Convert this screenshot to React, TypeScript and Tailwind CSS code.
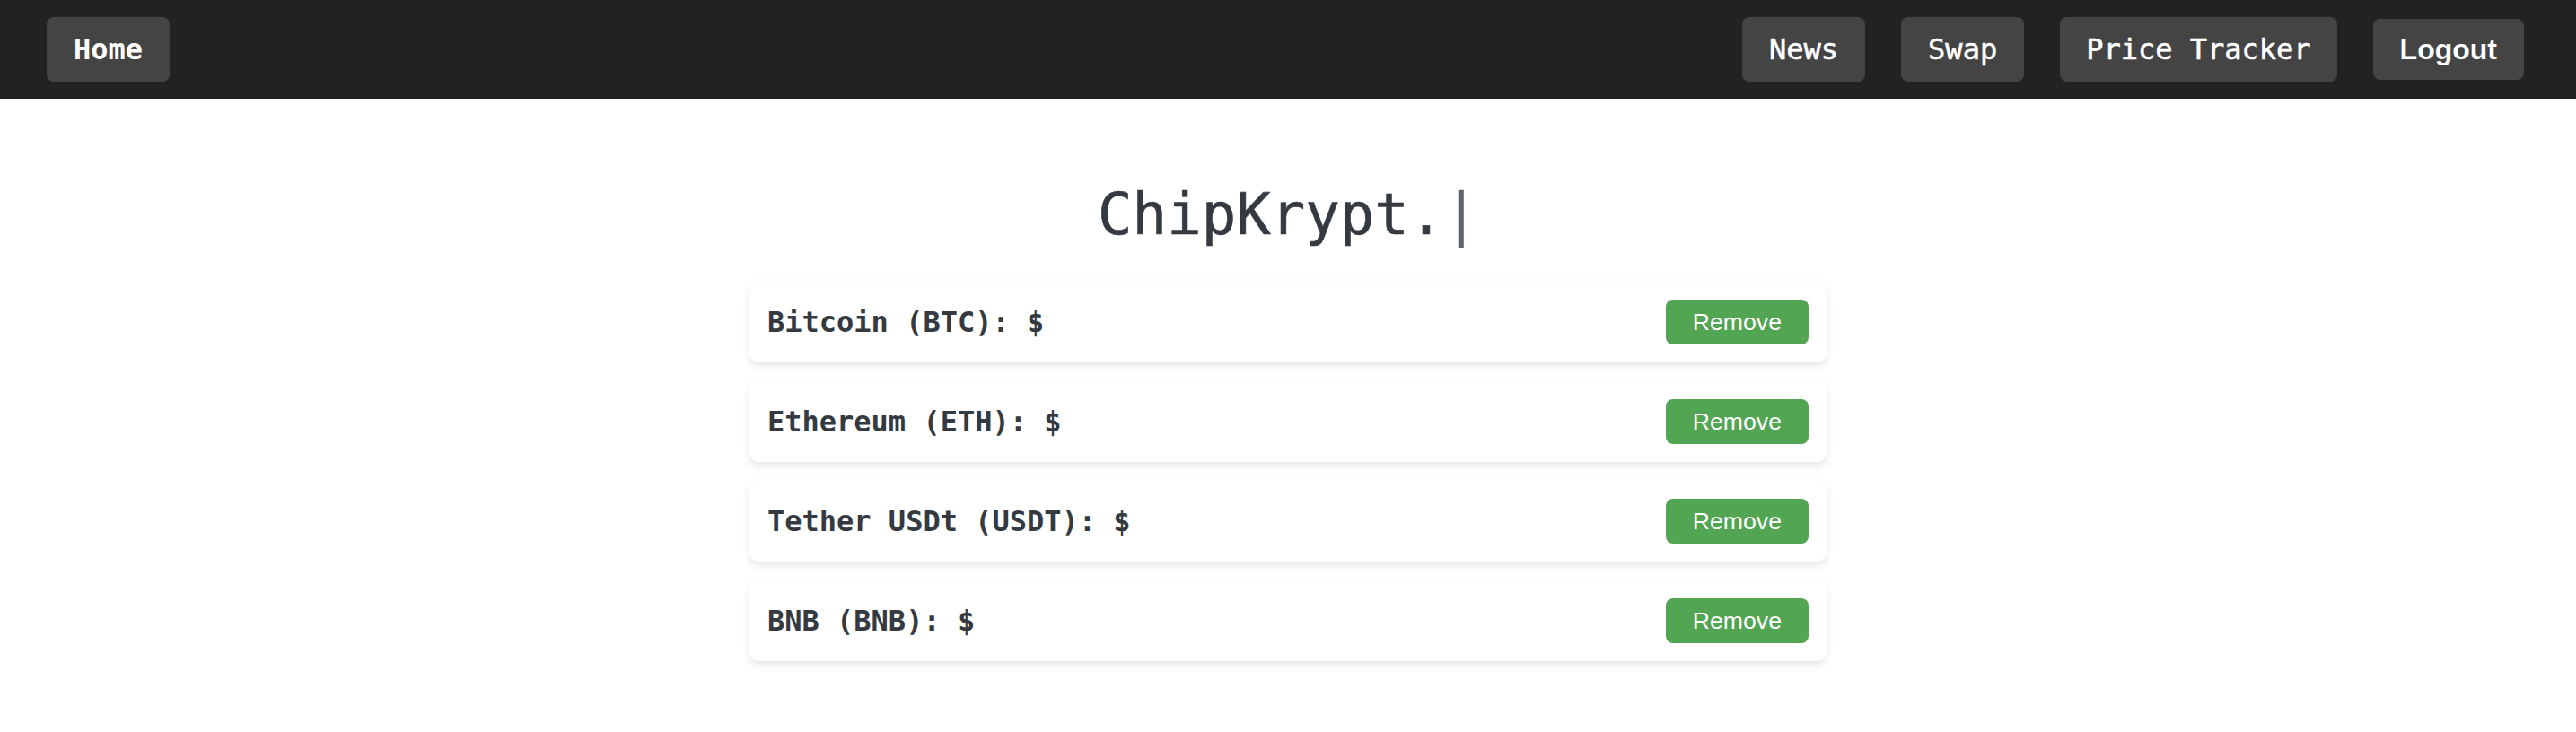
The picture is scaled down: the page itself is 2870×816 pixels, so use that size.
const coins = [
  { name: 'Bitcoin', symbol: 'BTC' },
  { name: 'Ethereum', symbol: 'ETH' },
  { name: 'Tether USDt', symbol: 'USDT' },
  { name: 'BNB', symbol: 'BNB' },
]

const mono = "font-['DejaVu_Sans_Mono','Liberation_Mono',monospace]"
const sans = "font-['Liberation_Sans',Arial,sans-serif]"

export default function App() {
  return (
    <div className="min-h-screen bg-white">
      {/* navbar */}
      <nav className="flex h-[110px] items-center justify-between bg-[#222222] pl-[52px] pr-[58px]">
        <button className={`${mono} h-[72px] rounded-[8px] bg-[#444444] px-[30px] text-[32px] font-bold text-white`}>
          Home
        </button>
        <div className="flex items-center gap-[40px]">
          <button className={`${mono} h-[72px] rounded-[8px] bg-[#444444] px-[30px] text-[32px] text-white [-webkit-text-stroke:0.6px_#fff]`}>
            News
          </button>
          <button className={`${mono} h-[72px] rounded-[8px] bg-[#444444] px-[30px] text-[32px] text-white [-webkit-text-stroke:0.6px_#fff]`}>
            Swap
          </button>
          <button className={`${mono} h-[72px] rounded-[8px] bg-[#444444] px-[29px] text-[32px] text-white [-webkit-text-stroke:0.6px_#fff]`}>
            Price Tracker
          </button>
          <button className={`${sans} h-[68px] rounded-[8px] bg-[#444444] px-[30px] text-[32px] font-bold text-white`}>
            Logout
          </button>
        </div>
      </nav>

      {/* title */}
      <h1 className={`${mono} mt-[92px] mb-[37px] text-center text-[64px] leading-[74px] font-normal text-[#343a40] [-webkit-text-stroke:0.6px_#343a40]`}>
        ChipKrypt.<span className="text-[#5f656b] [-webkit-text-stroke:0.6px_#5f656b]">|</span>
      </h1>

      {/* watchlist */}
      <div className="mx-auto flex w-[1200px] flex-col gap-[20px]">
        {coins.map((c) => (
          <div
            key={c.symbol}
            className="flex h-[91px] items-center justify-between rounded-[10px] bg-white px-[20px] shadow-[0_4px_8px_rgba(0,0,0,0.1)]"
          >
            <span className={`${mono} text-[32px] font-bold text-[#343a40]`}>
              {c.name} ({c.symbol}): $
            </span>
            <button className={`${sans} h-[50px] rounded-[8px] bg-[#52a552] px-[30px] text-[26.67px] text-white`}>
              Remove
            </button>
          </div>
        ))}
      </div>
    </div>
  )
}
